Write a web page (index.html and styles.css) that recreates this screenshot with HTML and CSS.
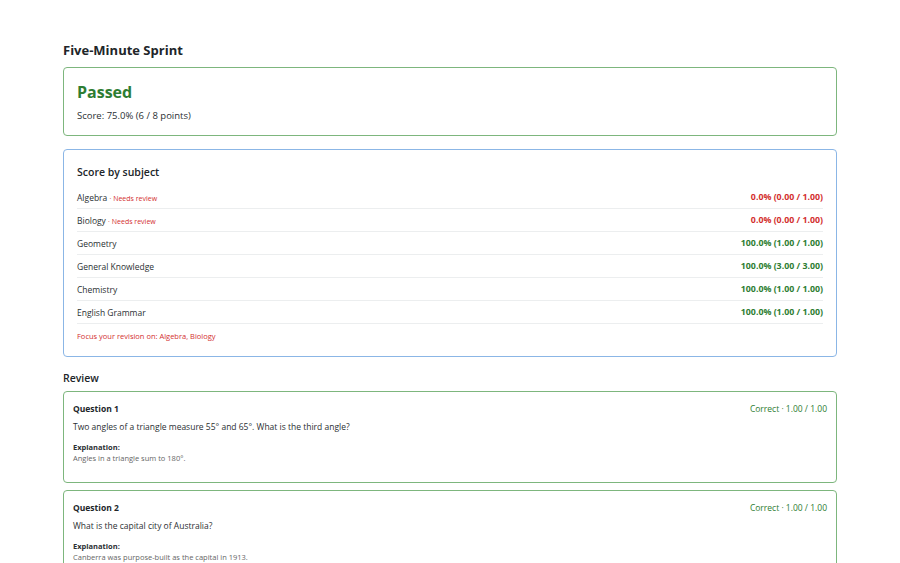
FILE: index.html
```html
<!DOCTYPE html>
<html lang="en">
<head>
<meta charset="utf-8">
<title>Five-Minute Sprint</title>
<link rel="stylesheet" href="styles.css">
</head>
<body>
<main class="page">
  <h1 class="title">Five-Minute Sprint</h1>

  <section class="card card-pass">
    <h2 class="result">Passed</h2>
    <p class="score">Score: 75.0% (6 / 8 points)</p>
  </section>

  <section class="card card-subject">
    <h3 class="subject-title">Score by subject</h3>
    <ul class="subjects">
      <li class="row"><span class="name">Algebra <span class="flag">· Needs review</span></span><span class="val bad">0.0% (0.00 / 1.00)</span></li>
      <li class="row"><span class="name">Biology <span class="flag">· Needs review</span></span><span class="val bad">0.0% (0.00 / 1.00)</span></li>
      <li class="row"><span class="name">Geometry</span><span class="val good">100.0% (1.00 / 1.00)</span></li>
      <li class="row"><span class="name">General Knowledge</span><span class="val good">100.0% (3.00 / 3.00)</span></li>
      <li class="row"><span class="name">Chemistry</span><span class="val good">100.0% (1.00 / 1.00)</span></li>
      <li class="row"><span class="name">English Grammar</span><span class="val good">100.0% (1.00 / 1.00)</span></li>
    </ul>
    <p class="focus">Focus your revision on: Algebra, Biology</p>
  </section>

  <h2 class="review-title">Review</h2>

  <article class="card qcard">
    <div class="qhead"><span class="qnum">Question 1</span><span class="qstatus">Correct · 1.00 / 1.00</span></div>
    <p class="qtext">Two angles of a triangle measure 55° and 65°. What is the third angle?</p>
    <div class="expl-label">Explanation:</div>
    <div class="expl">Angles in a triangle sum to 180°.</div>
  </article>

  <article class="card qcard">
    <div class="qhead"><span class="qnum">Question 2</span><span class="qstatus">Correct · 1.00 / 1.00</span></div>
    <p class="qtext">What is the capital city of Australia?</p>
    <div class="expl-label">Explanation:</div>
    <div class="expl">Canberra was purpose-built as the capital in 1913.</div>
  </article>
</main>
</body>
</html>
```

FILE: styles.css
```css
* { box-sizing: border-box; }
html, body { margin: 0; padding: 0; background: #fff; }
body {
  font-family: "Open Sans", "Noto Sans", "Liberation Sans", sans-serif;
  color: #2b2f33;
  font-size: 10px;
}
.page {
  width: 774px;
  margin: 0 auto;
  padding-top: 40px;
}
.title {
  font-size: 13px;
  font-weight: 700;
  margin: 0 0 7px 0;
  line-height: 20px;
  color: #212529;
}
.card {
  border: 1px solid #7db67d;
  border-radius: 4px;
  background: #fff;
}
.card-pass {
  padding: 12px 13px 11px 13px;
  margin-bottom: 13px;
}
.result {
  color: #2e7d32;
  font-size: 16px;
  font-weight: 700;
  margin: 0;
  line-height: 24px;
}
.score {
  margin: 4px 0 0 0;
  font-size: 9.5px;
  line-height: 16px;
}
.card-subject {
  border-color: #8bb6e6;
  padding: 13px 13px 14px 13px;
  margin-bottom: 13px;
}
.subject-title {
  font-size: 10.5px;
  font-weight: 600;
  margin: 0 0 5px 0;
  line-height: 18px;
  color: #212529;
}
.subjects { list-style: none; margin: 0; padding: 0; }
.row {
  display: flex;
  justify-content: space-between;
  align-items: center;
  height: 23px;
  border-bottom: 1px solid #eceeef;
  font-size: 8.5px;
}
.flag { color: #d32f2f; font-size: 7px; }
.val { font-weight: 700; font-size: 8.8px; }
.bad { color: #d32f2f; }
.good { color: #2e7d32; }
.focus {
  color: #d32f2f;
  font-size: 7.5px;
  margin: 6px 0 0 0;
  line-height: 12px;
}
.review-title {
  font-size: 10.5px;
  font-weight: 600;
  margin: 0 0 5px 0;
  line-height: 16px;
  color: #212529;
}
.qcard {
  padding: 10px 9px 3px 9px;
  margin-bottom: 7px;
}
.qhead {
  display: flex;
  justify-content: space-between;
  align-items: center;
  line-height: 14px;
}
.qnum { font-weight: 700; font-size: 8.5px; color: #212529; }
.qstatus { color: #2e7d32; font-size: 8.5px; }
.qtext {
  margin: 4px 0 8px 0;
  font-size: 8.5px;
  line-height: 14px;
}
.expl-label { font-weight: 700; font-size: 7.5px; line-height: 11px; }
.expl { color: #666; font-size: 7.5px; line-height: 11px; padding-bottom: 15px; }
```
